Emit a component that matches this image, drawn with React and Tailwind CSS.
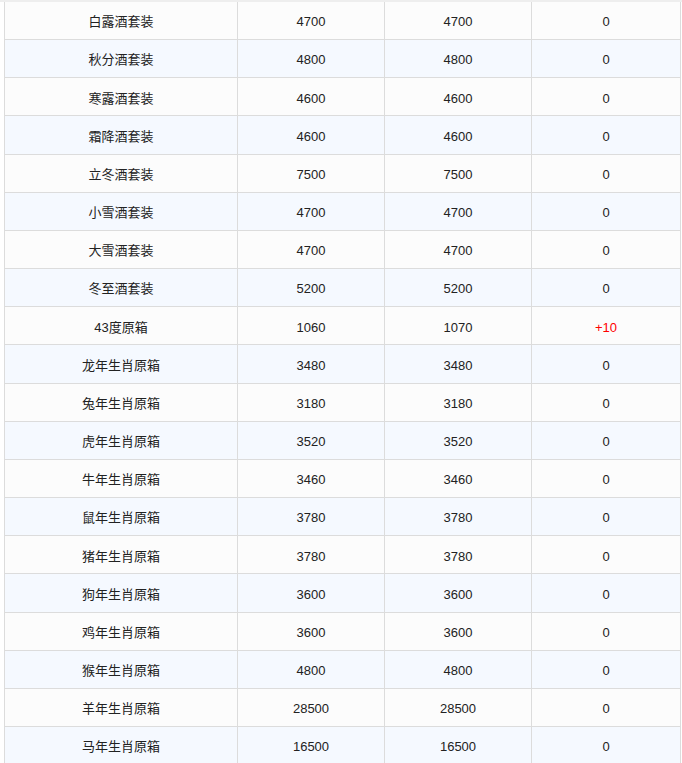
const ROWS = [
  ["白露酒套装", "4700", "4700", "0"],
  ["秋分酒套装", "4800", "4800", "0"],
  ["寒露酒套装", "4600", "4600", "0"],
  ["霜降酒套装", "4600", "4600", "0"],
  ["立冬酒套装", "7500", "7500", "0"],
  ["小雪酒套装", "4700", "4700", "0"],
  ["大雪酒套装", "4700", "4700", "0"],
  ["冬至酒套装", "5200", "5200", "0"],
  ["43度原箱", "1060", "1070", "+10"],
  ["龙年生肖原箱", "3480", "3480", "0"],
  ["兔年生肖原箱", "3180", "3180", "0"],
  ["虎年生肖原箱", "3520", "3520", "0"],
  ["牛年生肖原箱", "3460", "3460", "0"],
  ["鼠年生肖原箱", "3780", "3780", "0"],
  ["猪年生肖原箱", "3780", "3780", "0"],
  ["狗年生肖原箱", "3600", "3600", "0"],
  ["鸡年生肖原箱", "3600", "3600", "0"],
  ["猴年生肖原箱", "4800", "4800", "0"],
  ["羊年生肖原箱", "28500", "28500", "0"],
  ["马年生肖原箱", "16500", "16500", "0"],
];

export default function App() {
  return (
    <div className="w-[682px] h-[763px] overflow-hidden bg-white">
      <div className="h-[2px] bg-[#eeeeee]" />
      <div className="ml-[4px] w-[677px] border-l border-r border-[#dcdcdc] text-[13px] text-[#222] font-['Liberation_Sans','Noto_Sans_CJK_SC',sans-serif]">
        {ROWS.map((row, i) => (
          <div
            key={row[0]}
            className={`grid grid-cols-[233px_147px_147px_1fr] h-[38.17px] border-b border-[#dcdcdc] ${
              i % 2 === 0 ? "bg-[#fcfcfc]" : "bg-[#f5f9ff]"
            }`}
          >
            {row.map((cell, j) => (
              <div
                key={j}
                className={`flex items-center justify-center pt-[3px] ${j < 3 ? "border-r border-[#dcdcdc]" : ""} ${
                  cell.startsWith("+") ? "text-[#ff0000]" : ""
                }`}
              >
                {cell}
              </div>
            ))}
          </div>
        ))}
      </div>
    </div>
  );
}
